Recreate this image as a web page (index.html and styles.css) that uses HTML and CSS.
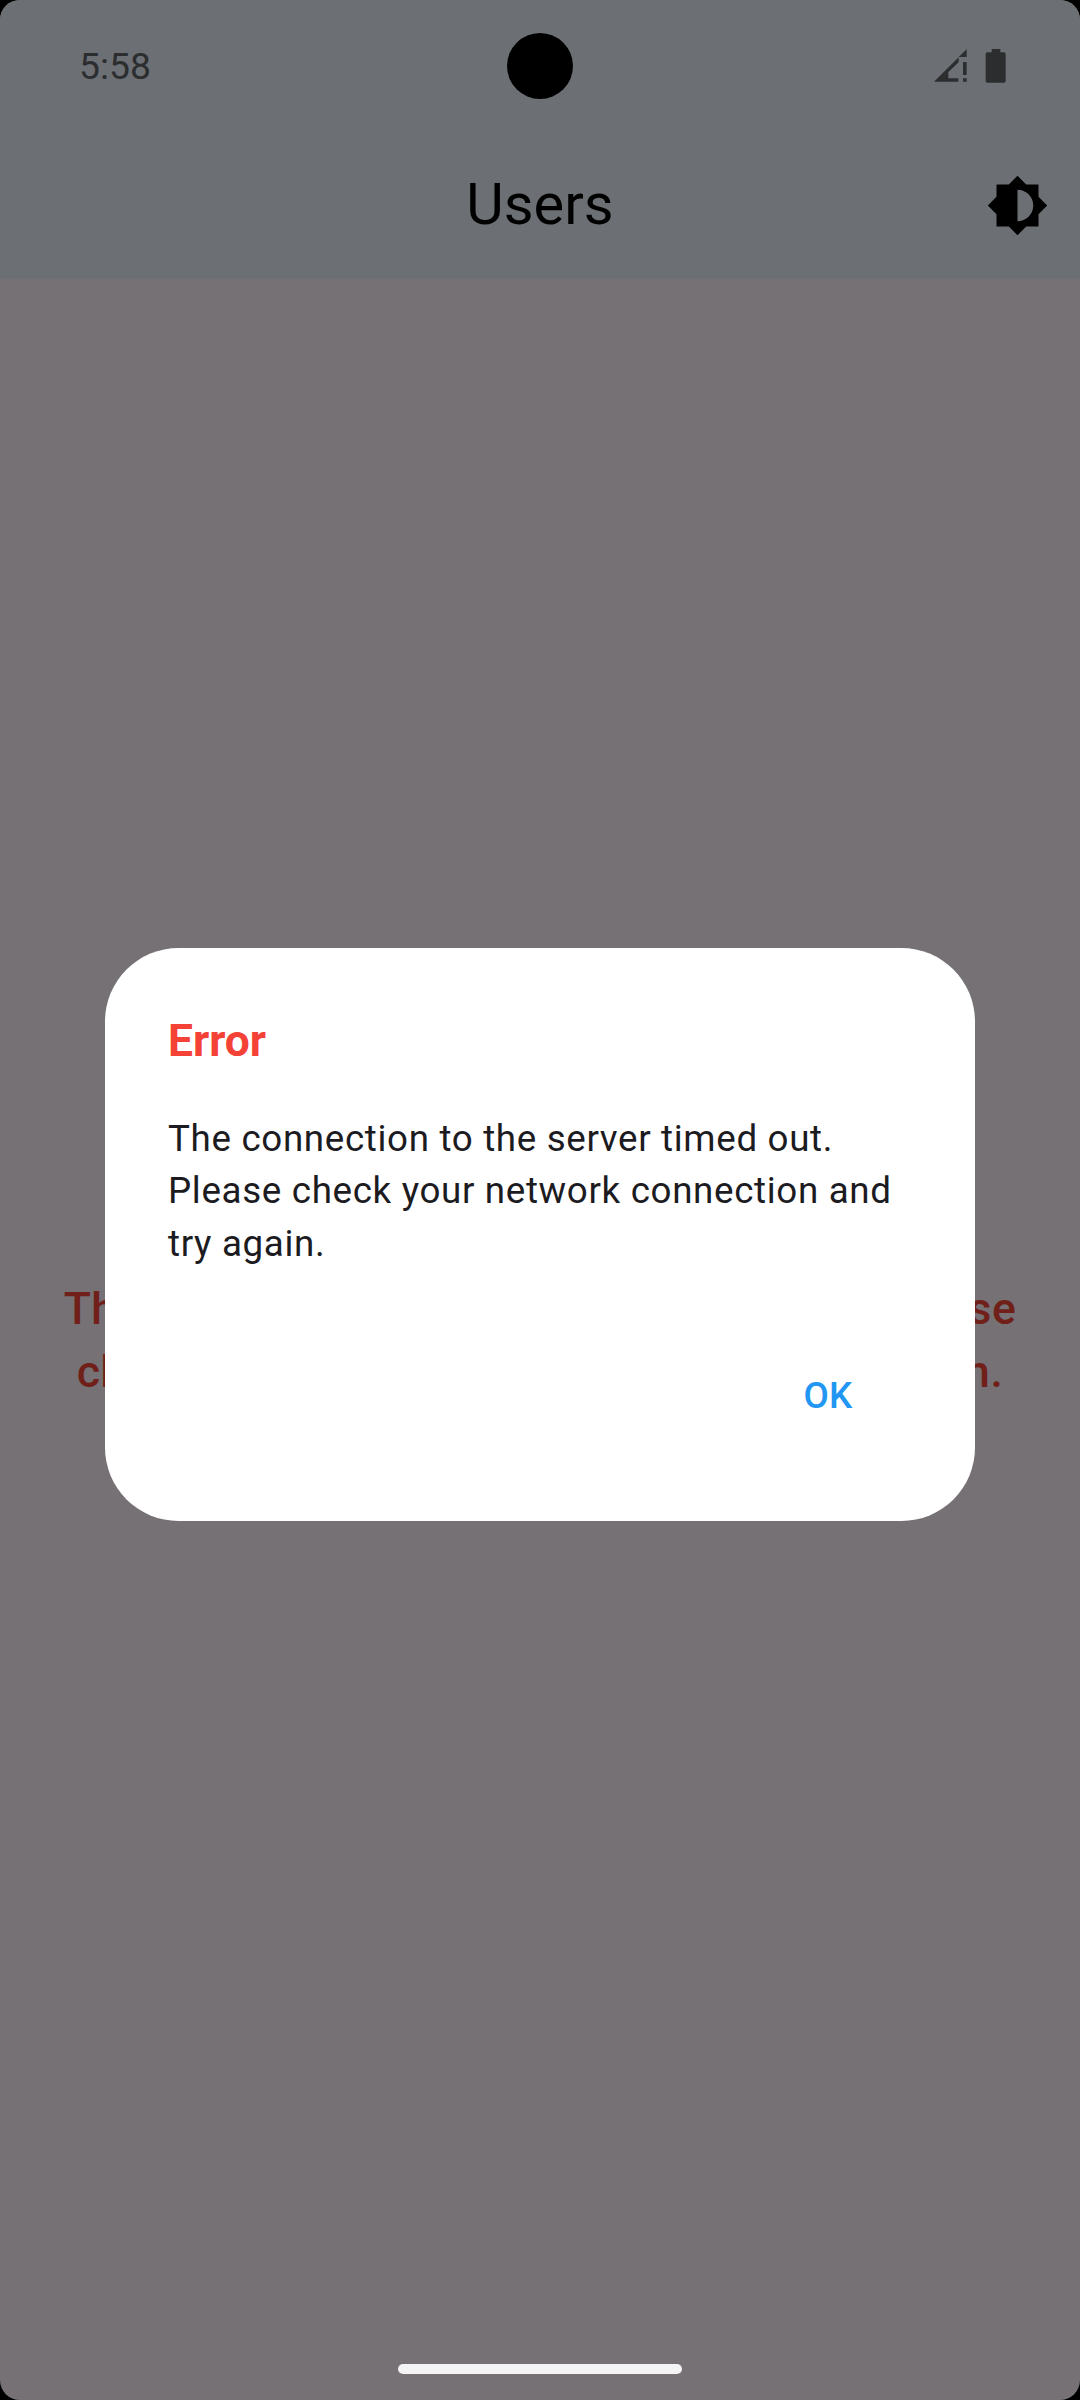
FILE: index.html
```html
<!DOCTYPE html>
<html lang="en">
<head>
<meta charset="utf-8">
<title>Users</title>
<link rel="stylesheet" href="styles.css">
</head>
<body>
<div class="screen">
  <header class="top">
    <div class="status">
      <span class="clock">5:58</span>
      <span class="camera"></span>
      <svg class="status-icons" viewBox="0 0 216 102" aria-hidden="true">
        <path d="M98 1v23H74zM0 98l74-73v15L43 69v19h30v10zM87 39h11v39H87zM87 88h11v10H87z"/>
        <path d="M173 0h26v10h11q5 0 5 5v81q0 5-5 5h-50q-5 0-5-5V15q0-5 5-5h13z"/>
      </svg>
    </div>
    <div class="appbar">
      <h1 class="title">Users</h1>
      <svg class="theme" viewBox="0 0 24 24" aria-hidden="true"><path d="M20 15.31 23.31 12 20 8.69V4h-4.69L12 .69 8.69 4H4v4.69L.69 12 4 15.31V20h4.69L12 23.31 15.31 20H20v-4.69zM12 18V6c3.31 0 6 2.69 6 6s-2.69 6-6 6z"/></svg>
    </div>
  </header>
  <main class="content">
    <p class="message">The connection to the server timed out. Please<br>check your network connection and try again.</p>
  </main>
  <footer class="nav"><span class="handle"></span></footer>
  <div class="overlay">
    <section class="dialog" role="alertdialog">
      <h2 class="dialog-title">Error</h2>
      <p class="dialog-text">The connection to the server timed out.<br>Please check your network connection and<br>try again.</p>
      <div class="actions"><button class="ok">OK</button></div>
    </section>
  </div>
</div>
</body>
</html>
```

FILE: styles.css
```css
* { box-sizing: border-box; margin: 0; padding: 0; }
body { background: #000; font-family: Roboto, sans-serif; }
.screen { position: relative; display: flex; flex-direction: column; width: 1080px; height: 2400px; overflow: hidden; border-radius: 20px; background: #757175; }
.top { height: 279px; background: #6c7075; }
.status { display: grid; grid-template-columns: 1fr 66px 1fr; align-items: center; height: 132px; }
.clock { padding-left: 79px; color: #2b2d2f; font-size: 37.3px; line-height: 44px; }
.camera { width: 66px; height: 66px; border-radius: 50%; background: #000; }
.status-icons { justify-self: end; width: 72px; height: 34px; margin-right: 74.5px; fill: #2b2d2f; }
.appbar { display: grid; grid-template-columns: 1fr auto 1fr; align-items: center; height: 147px; padding: 0 31.5px; }
.title { grid-column: 2; padding-bottom: 2px; font-size: 57.75px; font-weight: 400; line-height: 73px; }
.theme { justify-self: end; width: 63px; height: 63px; }
.content { flex: 1; padding: 999px 42px 0; }
.message { color: #701f19; font-size: 44.6px; font-weight: 500; line-height: 63px; letter-spacing: .52px; text-align: center; white-space: nowrap; }
.nav { display: flex; justify-content: center; height: 63px; padding-top: 27px; }
.handle { width: 284px; height: 10px; border-radius: 5px; background: #f4f4f4; }
.overlay { position: absolute; inset: 0; padding: 948px 105px 0; }
.dialog { height: 573px; padding: 63px; border-radius: 73.5px; background: #fff; }
.dialog-title { color: #f44336; font-size: 44.4px; font-weight: 700; line-height: 60px; }
.dialog-text { margin-top: 41.6px; color: #1c1b1f; font-size: 36.75px; line-height: 52.5px; letter-spacing: .656px; white-space: nowrap; }
.actions { display: flex; justify-content: flex-end; margin-top: 73px; }
.ok { height: 105px; padding: 0 31.5px; margin-right: 28px; border: 0; background: none; color: #2196f3; font: 500 36.75px Roboto, sans-serif; letter-spacing: .26px; }
```
